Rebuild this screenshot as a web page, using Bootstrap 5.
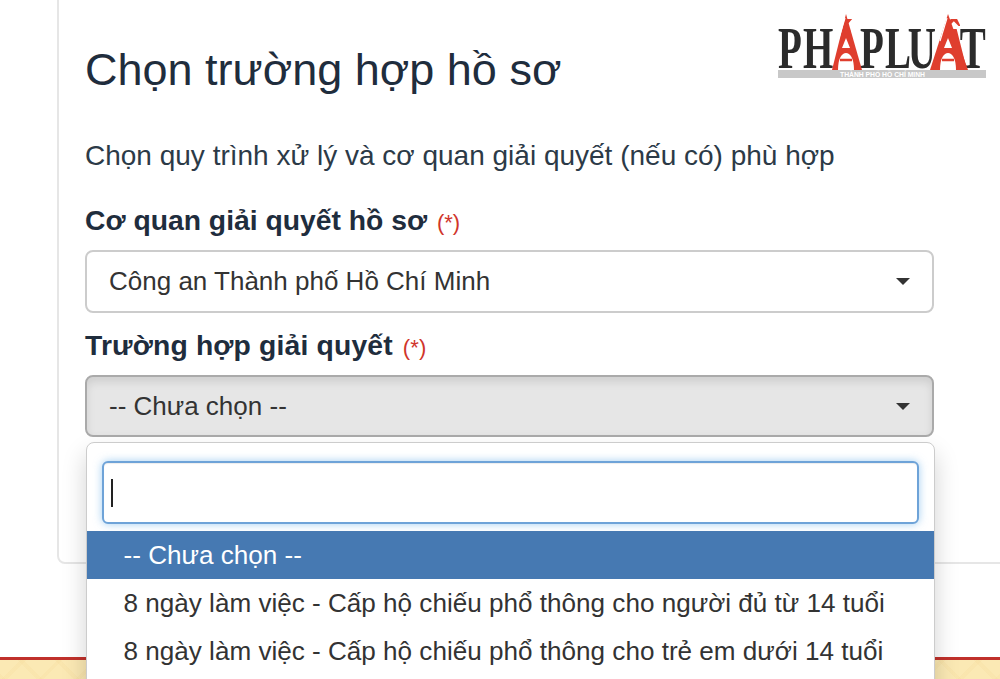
<!DOCTYPE html>
<html lang="vi">
<head>
<meta charset="utf-8">
<title>Chọn trường hợp hồ sơ</title>
<link href="https://cdn.jsdelivr.net/npm/bootstrap@5.3.0/dist/css/bootstrap.min.css" rel="stylesheet">
<style>
html,body{height:679px;overflow:hidden;background:#fff;}
body{font-family:"Liberation Sans",Arial,sans-serif;color:#333;}
.page-wrap{height:679px;overflow:hidden;}
.form-panel{margin:-20px -20px 0 57px;height:584px;border:2px solid #e6e6e6;border-radius:8px;padding:60px 64px 0 26px;background:#fff;}
.panel-title{font-size:45px;line-height:56px;font-weight:400;color:#1f2d3d;margin:0 0 40px 0;}
.panel-sub{font-size:28px;line-height:36px;color:#2c3a47;margin:0 0 28px 0;}
.field-label{font-size:28.3px;line-height:36px;font-weight:700;color:#1f2d3d;margin:0 0 9px 0;display:block;}
.label-wide{letter-spacing:.16px;}
.req{font-weight:400;color:#d0352b;font-size:22px;margin-left:2px;}
.sel-box{height:63px;width:849px;border:2px solid #ccc;border-radius:8px;background:#fff;font-size:26px;color:#333;padding:0 22px;display:flex;align-items:center;justify-content:space-between;margin-bottom:14px;}
.sel-open{background:#e6e6e6;border-color:#aaa;height:62px;margin-top:9px;box-shadow:inset 0 5px 8px rgba(0,0,0,.1);}
.caret-down{width:0;height:0;border-left:7px solid transparent;border-right:7px solid transparent;border-top:7px solid #333;}
.logo-svg{position:absolute;left:770px;top:5px;width:225px;height:80px;}
.logo-head{font-family:"Liberation Serif",serif;font-size:60px;font-weight:700;fill:#2b2b2b;}
.logo-sub{font-family:"Liberation Sans",sans-serif;font-size:8px;font-weight:700;fill:#fff;}
.drop-panel{position:absolute;left:86px;top:442px;width:848.5px;height:260px;background:#fff;border:1.5px solid #ccc;border-radius:8px 8px 0 0;box-shadow:0 12px 24px rgba(0,0,0,.18);padding:18px 0 0 0;z-index:5;}
.drop-search{width:817px;height:63px;margin:0 0 7px 14.5px;border:2px solid #6ea3d8;border-radius:6px;box-shadow:0 0 8px rgba(102,175,233,.6),inset 0 1px 1px rgba(0,0,0,.07);display:flex;align-items:center;padding-left:7px;background:#fff;}
.text-cursor{width:2px;height:28px;background:#222;}
.drop-item{height:48px;font-size:26.1px;line-height:48px;padding:0 0 0 36.5px;color:#333;white-space:nowrap;}
.drop-item.is-current{background:#4679b2;color:#fff;}
.foot-strip{position:absolute;left:0;right:0;top:657px;height:22px;background-color:#fbe9b4;border-top:3px solid #c0312b;background-image:repeating-linear-gradient(45deg,rgba(240,205,130,.12) 0 4px,transparent 4px 26px),repeating-linear-gradient(-45deg,rgba(240,205,130,.12) 0 4px,transparent 4px 26px);}
</style>
</head>
<body>
<div class="page-wrap position-relative">
  <div class="form-panel">
    <h1 class="panel-title">Chọn trường hợp hồ sơ</h1>
    <p class="panel-sub">Chọn quy trình xử lý và cơ quan giải quyết (nếu có) phù hợp</p>
    <label class="field-label">Cơ quan giải quyết hồ sơ <span class="req">(*)</span></label>
    <div class="sel-box"><span>Công an Thành phố Hồ Chí Minh</span><span class="caret-down"></span></div>
    <label class="field-label label-wide">Trường hợp giải quyết <span class="req">(*)</span></label>
    <div class="sel-box sel-open"><span>-- Chưa chọn --</span><span class="caret-down"></span></div>
  </div>
  <svg class="logo-svg" viewBox="0 0 225 80" role="img" aria-label="Pháp Luật">
    <defs><clipPath id="lg-clip"><rect x="0" y="14" width="225" height="51"/></clipPath></defs>
    <g clip-path="url(#lg-clip)">
      <text class="logo-head" transform="scale(.65 1)" y="63" x="12.3 50.8 97 138.5 177 212 261 292">PH<tspan fill="#df3e2e">Á</tspan>PLU<tspan fill="#df3e2e">Ậ</tspan>T</text>
    </g>
    <g>
      <path d="M76 9 92 65H62Z" fill="#df3e2e"/>
      <path d="M75 13 68 36" stroke="#fff" stroke-width="1.2" fill="none"/>
      <path d="M76 33 80 43H72Z" fill="#fff"/>
      <path d="M68 65C68 53 72 48 76 48 80 48 84 53 84 65Z" fill="#fff"/>
      <path d="M70 55H82" stroke="#df3e2e" stroke-width="2.5"/>
    </g>
    <g>
      <path d="M178 9 198 65H160Z" fill="#df3e2e"/>
      <path d="M177 13 170 36" stroke="#fff" stroke-width="1.2" fill="none"/>
      <path d="M178 33 182 43H174Z" fill="#fff"/>
      <path d="M170 65C170 53 174 48 178 48 182 48 186 53 186 65Z" fill="#fff"/>
      <path d="M172 55H184" stroke="#df3e2e" stroke-width="2.5"/>
    </g>
    <rect x="8" y="65" width="208" height="8" fill="#c8c8c8"/>
    <text class="logo-sub" x="70" y="72" textLength="85" lengthAdjust="spacingAndGlyphs">THÀNH PHỐ HỒ CHÍ MINH</text>
  </svg>
  <div class="foot-strip"></div>
  <div class="drop-panel">
    <div class="drop-search"><span class="text-cursor"></span></div>
    <div class="drop-item is-current">-- Chưa chọn --</div>
    <div class="drop-item">8 ngày làm việc - Cấp hộ chiếu phổ thông cho người đủ từ 14 tuổi</div>
    <div class="drop-item">8 ngày làm việc - Cấp hộ chiếu phổ thông cho trẻ em dưới 14 tuổi</div>
  </div>
</div>
<script src="https://cdn.jsdelivr.net/npm/bootstrap@5.3.0/dist/js/bootstrap.bundle.min.js"></script>
</body>
</html>
